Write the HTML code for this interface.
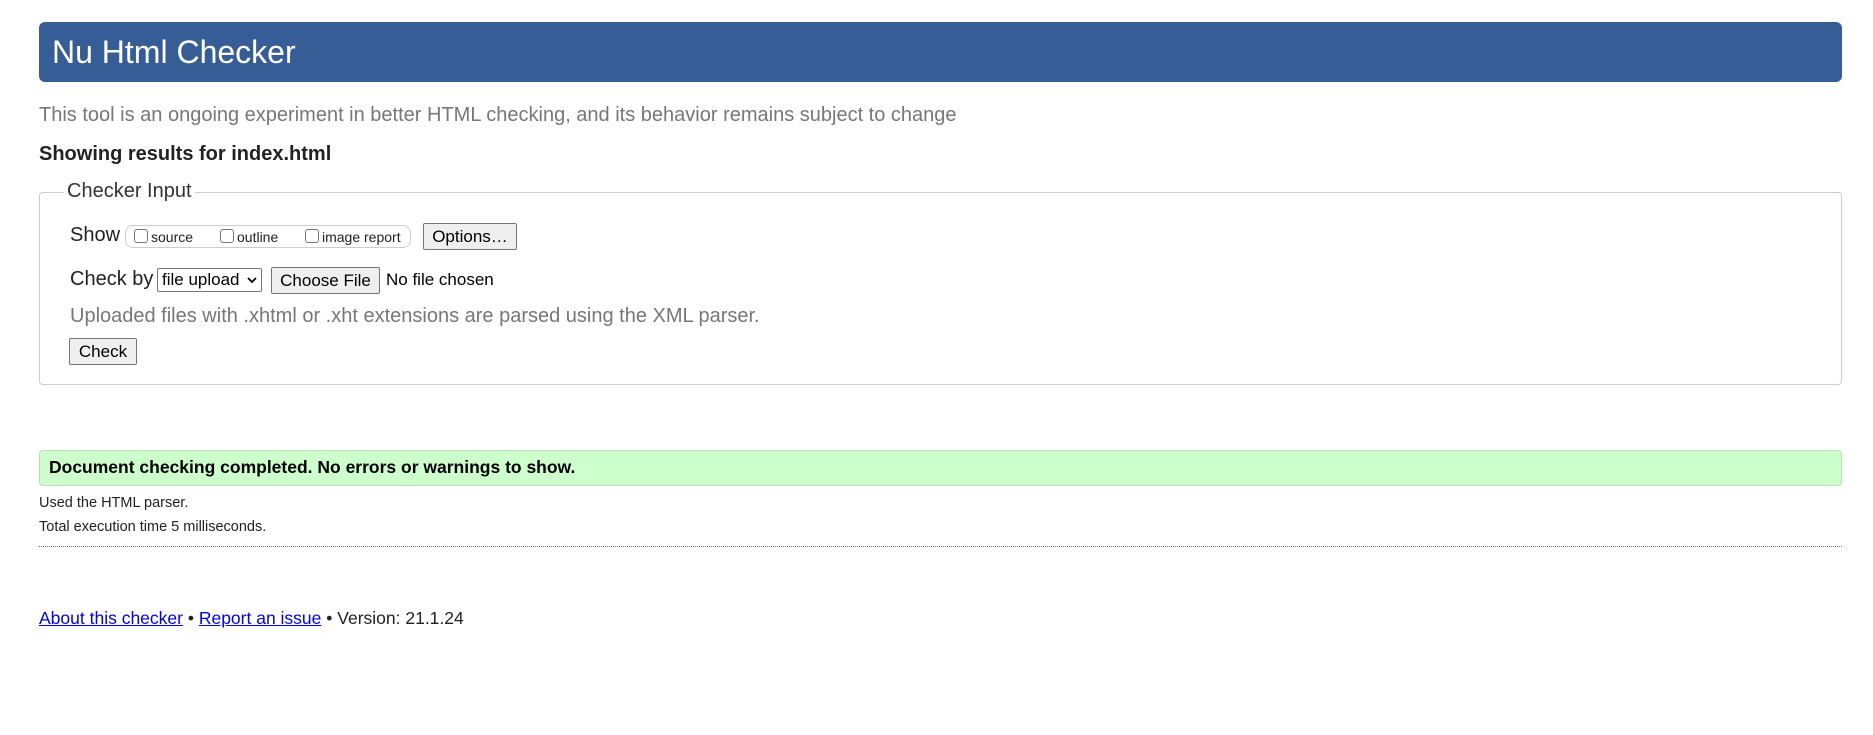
<!DOCTYPE html>
<html><head><meta charset="utf-8"><style>
body{margin:0;background:#fff;font-family:"Liberation Sans",Arial,sans-serif;color:#222;width:1873px;height:735px;position:relative;overflow:hidden}
.a{position:absolute;white-space:nowrap}
.hdr{left:39px;top:22px;width:1803px;height:60px;background:#365d95;border-radius:6px}
.hdr span{position:absolute;left:13px;top:12px;font-size:32px;color:#fff;line-height:36px}
.btn{background:#efefef;border:1px solid #767676;border-radius:2px;font-size:17px;color:#000;box-sizing:border-box;text-align:center}
.cb{display:inline-block;width:14px;height:14px;border:1px solid #767676;border-radius:3px;box-sizing:border-box;vertical-align:-1px;margin-right:3px;background:#fff}
a{color:#00e;text-decoration:underline}
</style></head><body>
<div class="a hdr"><span>Nu Html Checker</span></div>
<div class="a" style="left:39px;top:104px;font-size:20px;color:#777">This tool is an ongoing experiment in better HTML checking, and its behavior remains subject to change</div>
<div class="a" style="left:39px;top:143px;font-size:20px;font-weight:bold;color:#222">Showing results for index.html</div>
<div class="a" style="left:39px;top:192px;width:1803px;height:193px;border:1px solid #ccc;border-radius:4px;box-sizing:border-box"></div>
<div class="a" style="left:64px;top:180px;font-size:20px;background:#fff;padding:0 3px;color:#333">Checker Input</div>
<div class="a" style="left:70px;top:224px;font-size:20px;color:#222">Show</div>
<div class="a" style="left:125px;top:225px;width:286px;height:23px;border:1px solid #ccc;border-radius:8px;box-sizing:border-box;font-size:14px;color:#222">
<span class="a" style="left:8px;top:3px"><span class="cb"></span>source</span>
<span class="a" style="left:94px;top:3px"><span class="cb"></span>outline</span>
<span class="a" style="left:179px;top:3px"><span class="cb"></span>image report</span>
</div>
<div class="a btn" style="left:423px;top:223px;width:94px;height:27px;line-height:25px">Options…</div>
<div class="a" style="left:70px;top:268px;font-size:20px;color:#222">Check by</div>
<div class="a" style="left:157px;top:268px;width:105px;height:24px;border:1px solid #767676;border-radius:2px;box-sizing:border-box;font-size:17px;color:#000;line-height:22px;padding-left:4px">file upload</div>
<div class="a" style="left:246px;top:273px"><svg width="12" height="14"><path d="M2 5l4 4 4-4" fill="none" stroke="#000" stroke-width="1.8"/></svg></div>
<div class="a btn" style="left:271px;top:267px;width:109px;height:27px;line-height:25px">Choose File</div>
<div class="a" style="left:386px;top:270px;font-size:17px;color:#000">No file chosen</div>
<div class="a" style="left:70px;top:305px;font-size:20px;color:#777">Uploaded files with .xhtml or .xht extensions are parsed using the XML parser.</div>
<div class="a btn" style="left:69px;top:338px;width:68px;height:27px;line-height:25px">Check</div>
<div class="a" style="left:39px;top:450px;width:1803px;height:36px;background:#ccffcc;border:1px solid #bbddbb;border-radius:4px;box-sizing:border-box"></div>
<div class="a" style="left:49px;top:457px;font-size:17.5px;font-weight:bold;color:#000">Document checking completed. No errors or warnings to show.</div>
<div class="a" style="left:39px;top:495px;font-size:14.5px;color:#222">Used the HTML parser.</div>
<div class="a" style="left:39px;top:519px;font-size:14.5px;color:#222">Total execution time 5 milliseconds.</div>
<div class="a" style="left:39px;top:546px;width:1803px;border-top:1px dotted #666"></div>
<div class="a" style="left:39px;top:608px;font-size:17.5px;color:#222"><a>About this checker</a> • <a>Report an issue</a> • Version: 21.1.24</div>
</body></html>
